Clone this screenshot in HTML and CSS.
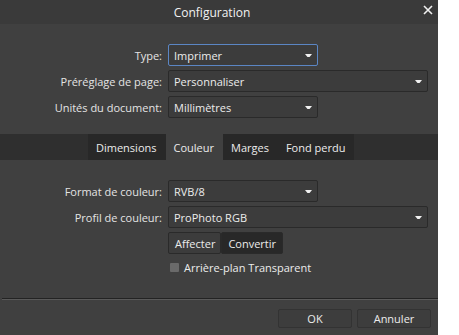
FILE: index.html
```html
<!DOCTYPE html>
<html lang="fr">
<head>
<meta charset="utf-8">
<link rel="stylesheet" href="styles.css">
</head>
<body>
<div class="dialog">
  <div class="titlebar">
    <span class="title">Configuration</span>
    <svg class="close" width="10" height="10" viewBox="0 0 10 10"><path d="M1 1 L9 9 M9 1 L1 9" stroke="#f0f0f0" stroke-width="1.6" fill="none"/></svg>
  </div>
  <div class="form top">
    <label class="lbl">Type:</label>
    <div class="select short focus"><span>Imprimer</span><i class="arrow"></i></div>
    <label class="lbl">Préréglage de page:</label>
    <div class="select long"><span>Personnaliser</span><i class="arrow"></i></div>
    <label class="lbl">Unités du document:</label>
    <div class="select short"><span>Millimètres</span><i class="arrow"></i></div>
  </div>
  <div class="tabbar">
    <div class="tabs">
      <div class="tab">Dimensions</div>
      <div class="tab active">Couleur</div>
      <div class="tab">Marges</div>
      <div class="tab">Fond perdu</div>
    </div>
  </div>
  <div class="form bottom">
    <label class="lbl">Format de couleur:</label>
    <div class="select short"><span>RVB/8</span><i class="arrow"></i></div>
    <label class="lbl">Profil de couleur:</label>
    <div class="select long"><span>ProPhoto RGB</span><i class="arrow"></i></div>
    <span></span>
    <div class="seg"><div class="segbtn on">Affecter</div><div class="segbtn">Convertir</div></div>
    <span></span>
    <div class="check"><i class="box"></i><span>Arrière-plan Transparent</span></div>
  </div>
  <div class="sep"></div>
  <div class="footer">
    <div class="btn">OK</div>
    <div class="btn">Annuler</div>
  </div>
</div>
</body>
</html>
```
FILE: styles.css
```css
* { box-sizing: border-box; }
html, body { margin: 0; padding: 0; background: #ffffff; }
body { font-family: "Open Sans", "Noto Sans", sans-serif; font-size: 11px; color: #ececec; }
.dialog { width: 438px; height: 335px; background: #404040; display: flex; flex-direction: column; }
.titlebar { height: 24px; background: #3a3a3a; display: flex; align-items: center; position: relative; }
.title { flex: 1; text-align: center; padding-right: 14px; font-size: 12px; color: #f2f2f2; }
.close { position: absolute; right: 5px; top: 5px; }
.form { display: grid; grid-template-columns: 162px auto; column-gap: 6px; row-gap: 4px; align-items: center; justify-items: start; }
.form.top { margin-top: 20px; }
.form.bottom { margin-top: 20px; }
.lbl { justify-self: end; color: #e4e4e4; }
.select { height: 22px; border: 1px solid #2a2a2a; border-radius: 2px; background: #3c3c3c; display: flex; align-items: center; padding: 0 5px 0 5px; justify-content: space-between; }
.select.short { width: 150px; }
.select.long { width: 260px; }
.select.focus { border-color: #5b86c4; }
.arrow { width: 7px; height: 3px; background: #f0f0f0; clip-path: polygon(0 0, 100% 0, 65% 100%, 35% 100%); margin-top: 1px; }
.tabbar { margin-top: 16px; height: 26px; background: #2f2f2f; display: flex; padding-left: 88px; }
.tabs { display: flex; background: #282828; }
.tab { display: flex; align-items: center; padding: 0 9px 0 8px; color: #ececec; }
.tab.active { background: #404040; }
.seg { display: flex; height: 22px; }
.segbtn { display: flex; align-items: center; padding: 0 6px; background: #282828; border: 1px solid #2a2a2a; border-radius: 2px; }
.segbtn.on { background: #3c3c3c; padding: 0 5px 0 6px; }
.check { display: flex; align-items: center; gap: 5px; height: 18px; padding-left: 2px; }
.box { width: 9px; height: 9px; background: #6a6a6a; border-radius: 1px; }
.sep { margin-top: 22px; margin-left: 2px; height: 2px; border-top: 1px solid #232323; border-bottom: 1px solid #5a5a5a; }
.footer { display: flex; justify-content: flex-end; gap: 5px; padding: 9px 7px 0 0; }
.btn { width: 74px; height: 19px; border: 1px solid #333333; border-radius: 2px; background: #3d3d3d; display: flex; align-items: center; justify-content: center; }
```
